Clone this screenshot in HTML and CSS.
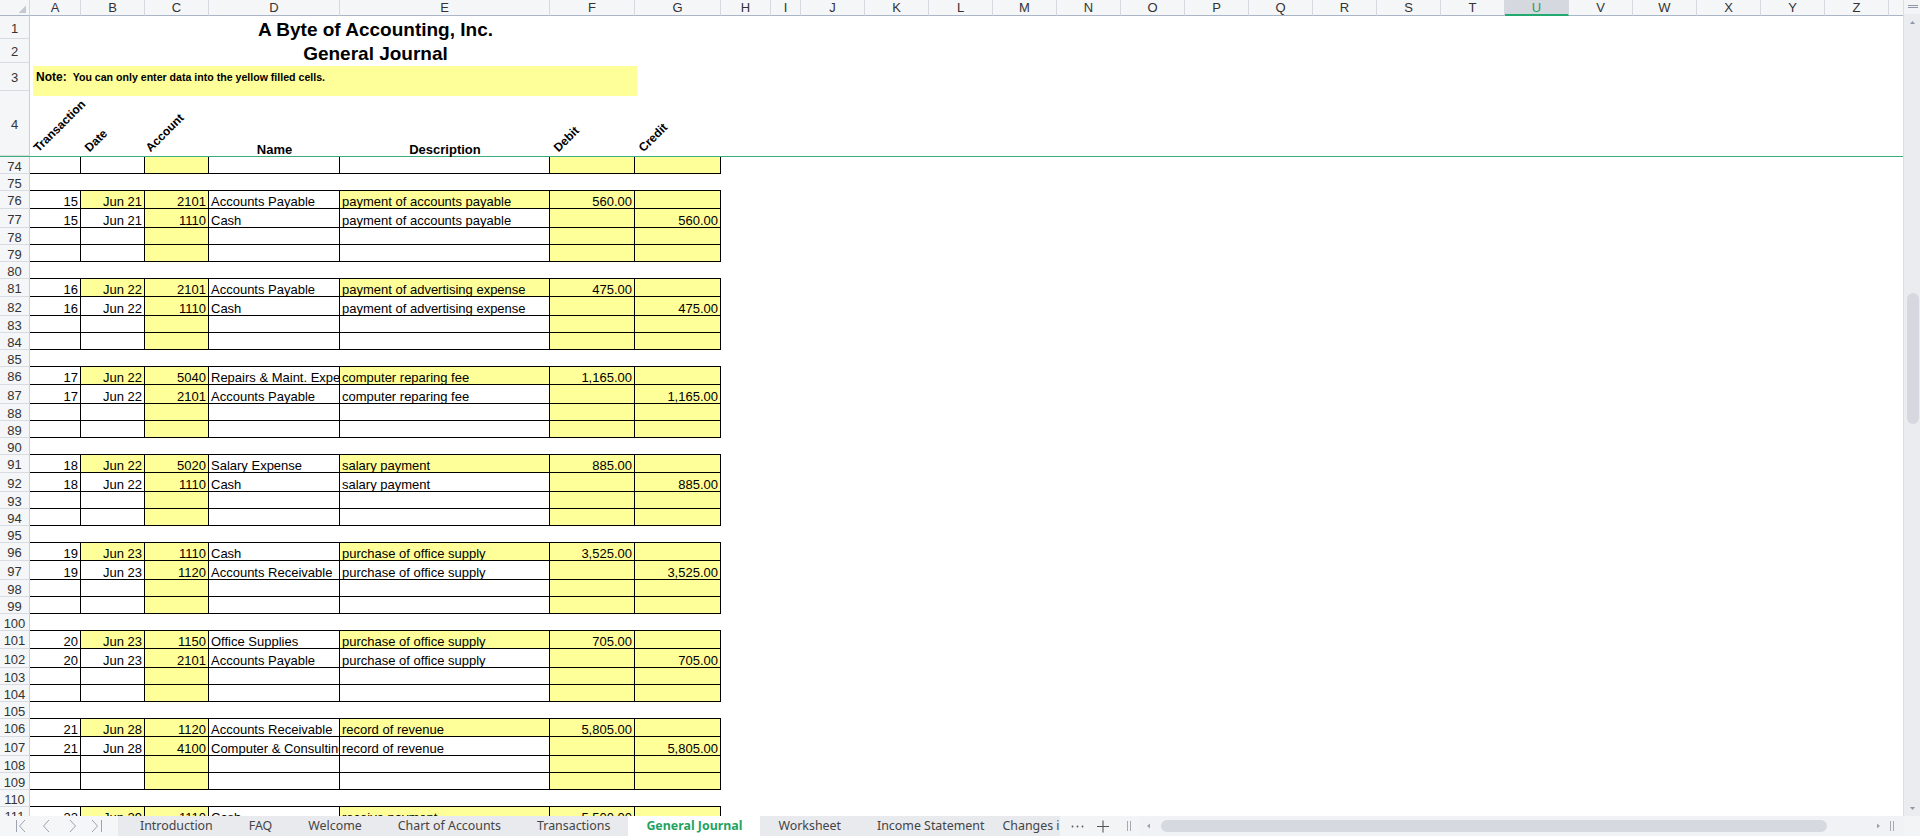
FILE: index.html
```html
<!DOCTYPE html>
<html lang="en">
<head>
<meta charset="utf-8">
<title>General Journal</title>
<link rel="stylesheet" href="styles.css">
</head>
<body>
<div class="app">
  <div class="main">
    <div class="sheet">
      <div class="colhdr">
        <div class="corner"><svg width="30" height="15" viewBox="0 0 30 15"><polygon points="26,5.5 26,13 18.5,13" fill="#c5c8ce"/></svg></div>
        <div class="ch wa">A</div><div class="ch wb">B</div><div class="ch wc">C</div><div class="ch wd">D</div><div class="ch we">E</div><div class="ch wf">F</div><div class="ch wg">G</div><div class="ch wh">H</div><div class="ch wi">I</div><div class="ch wn">J</div><div class="ch wn">K</div><div class="ch wn">L</div><div class="ch wn">M</div><div class="ch wn">N</div><div class="ch wn">O</div><div class="ch wn">P</div><div class="ch wn">Q</div><div class="ch wn">R</div><div class="ch wn">S</div><div class="ch wn">T</div><div class="ch wn sel">U</div><div class="ch wn">V</div><div class="ch wn">W</div><div class="ch wn">X</div><div class="ch wn">Y</div><div class="ch wn">Z</div><div class="ch rest"></div>
      </div>
      <div class="frozen">
        <div class="row h23"><div class="rh">1</div><div class="title">A Byte of Accounting, Inc.</div></div>
        <div class="row h24"><div class="rh">2</div><div class="title">General Journal</div></div>
        <div class="row h28"><div class="rh">3</div></div>
        <div class="row h65"><div class="rh">4</div><div class="hc rot wa"><span>Transaction</span></div><div class="hc rot wb"><span>Date</span></div><div class="hc rot acc wc"><span>Account</span></div><div class="hc lab wd">Name</div><div class="hc lab we">Description</div><div class="hc rot wf"><span>Debit</span></div><div class="hc rot cr wg"><span>Credit</span></div></div>
      </div>
      <div class="note"><b>Note:</b><span>You can only enter data into the yellow filled cells.</span></div>
      <div class="freeze"></div>
      <div class="body">
        <div class="row h17"><div class="rh">74</div><div class="cell wa"></div><div class="cell wb"></div><div class="cell wc y"></div><div class="cell wd"></div><div class="cell we"></div><div class="cell wf y"></div><div class="cell wg y"></div></div>

        <div class="row h17"><div class="rh">75</div><div class="spline"></div></div>
        <div class="row h18"><div class="rh">76</div><div class="cell wa n">15</div><div class="cell wb n y">Jun 21</div><div class="cell wc n y">2101</div><div class="cell wd">Accounts Payable</div><div class="cell we y">payment of accounts payable</div><div class="cell wf n y">560.00</div><div class="cell wg n y"></div></div>
        <div class="row h19"><div class="rh">77</div><div class="cell wa n">15</div><div class="cell wb n">Jun 21</div><div class="cell wc n y">1110</div><div class="cell wd">Cash</div><div class="cell we">payment of accounts payable</div><div class="cell wf n y"></div><div class="cell wg n y">560.00</div></div>
        <div class="row h17"><div class="rh">78</div><div class="cell wa"></div><div class="cell wb"></div><div class="cell wc y"></div><div class="cell wd"></div><div class="cell we"></div><div class="cell wf y"></div><div class="cell wg y"></div></div>
        <div class="row h17"><div class="rh">79</div><div class="cell wa"></div><div class="cell wb"></div><div class="cell wc y"></div><div class="cell wd"></div><div class="cell we"></div><div class="cell wf y"></div><div class="cell wg y"></div></div>

        <div class="row h17"><div class="rh">80</div><div class="spline"></div></div>
        <div class="row h18"><div class="rh">81</div><div class="cell wa n">16</div><div class="cell wb n y">Jun 22</div><div class="cell wc n y">2101</div><div class="cell wd">Accounts Payable</div><div class="cell we y">payment of advertising expense</div><div class="cell wf n y">475.00</div><div class="cell wg n y"></div></div>
        <div class="row h19"><div class="rh">82</div><div class="cell wa n">16</div><div class="cell wb n">Jun 22</div><div class="cell wc n y">1110</div><div class="cell wd">Cash</div><div class="cell we">payment of advertising expense</div><div class="cell wf n y"></div><div class="cell wg n y">475.00</div></div>
        <div class="row h17"><div class="rh">83</div><div class="cell wa"></div><div class="cell wb"></div><div class="cell wc y"></div><div class="cell wd"></div><div class="cell we"></div><div class="cell wf y"></div><div class="cell wg y"></div></div>
        <div class="row h17"><div class="rh">84</div><div class="cell wa"></div><div class="cell wb"></div><div class="cell wc y"></div><div class="cell wd"></div><div class="cell we"></div><div class="cell wf y"></div><div class="cell wg y"></div></div>

        <div class="row h17"><div class="rh">85</div><div class="spline"></div></div>
        <div class="row h18"><div class="rh">86</div><div class="cell wa n">17</div><div class="cell wb n y">Jun 22</div><div class="cell wc n y">5040</div><div class="cell wd">Repairs &amp; Maint. Expense</div><div class="cell we y">computer reparing fee</div><div class="cell wf n y">1,165.00</div><div class="cell wg n y"></div></div>
        <div class="row h19"><div class="rh">87</div><div class="cell wa n">17</div><div class="cell wb n">Jun 22</div><div class="cell wc n y">2101</div><div class="cell wd">Accounts Payable</div><div class="cell we">computer reparing fee</div><div class="cell wf n y"></div><div class="cell wg n y">1,165.00</div></div>
        <div class="row h17"><div class="rh">88</div><div class="cell wa"></div><div class="cell wb"></div><div class="cell wc y"></div><div class="cell wd"></div><div class="cell we"></div><div class="cell wf y"></div><div class="cell wg y"></div></div>
        <div class="row h17"><div class="rh">89</div><div class="cell wa"></div><div class="cell wb"></div><div class="cell wc y"></div><div class="cell wd"></div><div class="cell we"></div><div class="cell wf y"></div><div class="cell wg y"></div></div>

        <div class="row h17"><div class="rh">90</div><div class="spline"></div></div>
        <div class="row h18"><div class="rh">91</div><div class="cell wa n">18</div><div class="cell wb n y">Jun 22</div><div class="cell wc n y">5020</div><div class="cell wd">Salary Expense</div><div class="cell we y">salary payment</div><div class="cell wf n y">885.00</div><div class="cell wg n y"></div></div>
        <div class="row h19"><div class="rh">92</div><div class="cell wa n">18</div><div class="cell wb n">Jun 22</div><div class="cell wc n y">1110</div><div class="cell wd">Cash</div><div class="cell we">salary payment</div><div class="cell wf n y"></div><div class="cell wg n y">885.00</div></div>
        <div class="row h17"><div class="rh">93</div><div class="cell wa"></div><div class="cell wb"></div><div class="cell wc y"></div><div class="cell wd"></div><div class="cell we"></div><div class="cell wf y"></div><div class="cell wg y"></div></div>
        <div class="row h17"><div class="rh">94</div><div class="cell wa"></div><div class="cell wb"></div><div class="cell wc y"></div><div class="cell wd"></div><div class="cell we"></div><div class="cell wf y"></div><div class="cell wg y"></div></div>

        <div class="row h17"><div class="rh">95</div><div class="spline"></div></div>
        <div class="row h18"><div class="rh">96</div><div class="cell wa n">19</div><div class="cell wb n y">Jun 23</div><div class="cell wc n y">1110</div><div class="cell wd">Cash</div><div class="cell we y">purchase of office supply</div><div class="cell wf n y">3,525.00</div><div class="cell wg n y"></div></div>
        <div class="row h19"><div class="rh">97</div><div class="cell wa n">19</div><div class="cell wb n">Jun 23</div><div class="cell wc n y">1120</div><div class="cell wd">Accounts Receivable</div><div class="cell we">purchase of office supply</div><div class="cell wf n y"></div><div class="cell wg n y">3,525.00</div></div>
        <div class="row h17"><div class="rh">98</div><div class="cell wa"></div><div class="cell wb"></div><div class="cell wc y"></div><div class="cell wd"></div><div class="cell we"></div><div class="cell wf y"></div><div class="cell wg y"></div></div>
        <div class="row h17"><div class="rh">99</div><div class="cell wa"></div><div class="cell wb"></div><div class="cell wc y"></div><div class="cell wd"></div><div class="cell we"></div><div class="cell wf y"></div><div class="cell wg y"></div></div>

        <div class="row h17"><div class="rh">100</div><div class="spline"></div></div>
        <div class="row h18"><div class="rh">101</div><div class="cell wa n">20</div><div class="cell wb n y">Jun 23</div><div class="cell wc n y">1150</div><div class="cell wd">Office Supplies</div><div class="cell we y">purchase of office supply</div><div class="cell wf n y">705.00</div><div class="cell wg n y"></div></div>
        <div class="row h19"><div class="rh">102</div><div class="cell wa n">20</div><div class="cell wb n">Jun 23</div><div class="cell wc n y">2101</div><div class="cell wd">Accounts Payable</div><div class="cell we">purchase of office supply</div><div class="cell wf n y"></div><div class="cell wg n y">705.00</div></div>
        <div class="row h17"><div class="rh">103</div><div class="cell wa"></div><div class="cell wb"></div><div class="cell wc y"></div><div class="cell wd"></div><div class="cell we"></div><div class="cell wf y"></div><div class="cell wg y"></div></div>
        <div class="row h17"><div class="rh">104</div><div class="cell wa"></div><div class="cell wb"></div><div class="cell wc y"></div><div class="cell wd"></div><div class="cell we"></div><div class="cell wf y"></div><div class="cell wg y"></div></div>

        <div class="row h17"><div class="rh">105</div><div class="spline"></div></div>
        <div class="row h18"><div class="rh">106</div><div class="cell wa n">21</div><div class="cell wb n y">Jun 28</div><div class="cell wc n y">1120</div><div class="cell wd">Accounts Receivable</div><div class="cell we y">record of revenue</div><div class="cell wf n y">5,805.00</div><div class="cell wg n y"></div></div>
        <div class="row h19"><div class="rh">107</div><div class="cell wa n">21</div><div class="cell wb n">Jun 28</div><div class="cell wc n y">4100</div><div class="cell wd">Computer &amp; Consulting Revenue</div><div class="cell we">record of revenue</div><div class="cell wf n y"></div><div class="cell wg n y">5,805.00</div></div>
        <div class="row h17"><div class="rh">108</div><div class="cell wa"></div><div class="cell wb"></div><div class="cell wc y"></div><div class="cell wd"></div><div class="cell we"></div><div class="cell wf y"></div><div class="cell wg y"></div></div>
        <div class="row h17"><div class="rh">109</div><div class="cell wa"></div><div class="cell wb"></div><div class="cell wc y"></div><div class="cell wd"></div><div class="cell we"></div><div class="cell wf y"></div><div class="cell wg y"></div></div>

        <div class="row h17"><div class="rh">110</div><div class="spline"></div></div>
        <div class="row h18"><div class="rh">111</div><div class="cell wa n">22</div><div class="cell wb n y">Jun 29</div><div class="cell wc n y">1110</div><div class="cell wd">Cash</div><div class="cell we y">receive payment</div><div class="cell wf n y">5,500.00</div><div class="cell wg n y"></div></div>
      </div>
    </div>
    <div class="vscroll">
      <div class="vtop"><svg width="16" height="14" viewBox="0 0 16 14"><path d="M4 5.5H14M4 7.5H14" stroke="#8e97a9" stroke-width="1"/></svg></div>
      <div class="varrow"><svg width="16" height="16" viewBox="0 0 16 16"><polygon points="6,10 11,10 8.5,7" fill="#8e97a9"/></svg></div>
      <div class="vtrack"><div class="vthumb"></div></div>
      <div class="varrow"><svg width="16" height="16" viewBox="0 0 16 16"><polygon points="6,7 11,7 8.5,10" fill="#8e97a9"/></svg></div>
    </div>
  </div>
  <div class="tabbar">
    <div class="nav"><svg width="118" height="20" viewBox="0 0 118 20"><g fill="none" stroke="#9ca2ae" stroke-width="1"><path d="M16.5 4V16M25 4L19.5 10L25 16"/><path d="M49 4L43.5 10L49 16"/><path d="M70 4L75.5 10L70 16"/><path d="M92 4L97.5 10L92 16M101.5 4V16"/></g></svg></div>
    <div class="tabs">
      <div class="tab">Introduction</div>
      <div class="tab">FAQ</div>
      <div class="tab">Welcome</div>
      <div class="tab">Chart of Accounts</div>
      <div class="tab">Transactions</div>
      <div class="tab active">General Journal</div>
      <div class="tab">Worksheet</div>
      <div class="tab">Income Statement</div>
      <div class="tab last">Changes in Equity</div>
    </div>
    <div class="tools"><svg width="80" height="20" viewBox="0 0 80 20"><g fill="#555"><circle cx="12.5" cy="10.5" r="0.9"/><circle cx="17.5" cy="10.5" r="0.9"/><circle cx="22.5" cy="10.5" r="0.9"/></g><path d="M37 10.5H49M43 4.5V16.5" stroke="#555" stroke-width="1.1" fill="none"/><path d="M67.5 5V15M70.5 5V15" stroke="#a4a9b3" stroke-width="1" fill="none"/></svg></div>
    <div class="hscroll">
      <svg class="harrow" width="16" height="20" viewBox="0 0 16 20"><polygon points="10,7.5 10,12.5 7,10" fill="#9ca2ae"/></svg>
      <div class="hthumb"></div>
      <svg class="harrow right" width="16" height="20" viewBox="0 0 16 20"><polygon points="6,7.5 6,12.5 9,10" fill="#9ca2ae"/></svg>
      <svg class="hsplit" width="8" height="20" viewBox="0 0 8 20"><path d="M2.5 5V15M5.5 5V15" stroke="#a4a9b3" stroke-width="1" fill="none"/></svg>
    </div>
    <div class="bcorner"></div>
  </div>
</div>
</body>
</html>
```

FILE: styles.css
```css
html, body {
  margin: 0;
  padding: 0;
}
body {
  width: 1920px;
  height: 836px;
  overflow: hidden;
  background: #fff;
  font-family: "Liberation Sans", Arial, sans-serif;
  color: #000;
}
.app {
  display: flex;
  flex-direction: column;
  width: 1920px;
  height: 836px;
}
.main {
  display: flex;
  height: 816px;
}
.sheet {
  position: relative;
  width: 1903px;
  height: 816px;
  overflow: hidden;
  background: #fff;
  flex: none;
}

/* column header */
.colhdr {
  display: flex;
  height: 16px;
}
.corner, .ch {
  flex: none;
  box-sizing: border-box;
  height: 16px;
  background: #f5f6f8;
  border-bottom: 1px solid #abb5c8;
}
.corner {
  width: 30px;
  border-right: 1px solid #d3d7de;
}
.corner svg { display: block; }
.ch {
  border-right: 1px solid #d6d9e0;
  font-size: 13px;
  line-height: 15px;
  color: #333;
  text-align: center;
}
.ch.sel {
  background: #d5d8de;
  color: #1e9f68;
  border-bottom: 2px solid #21a96f;
}
.ch.rest {
  flex: 1;
  border-right: none;
}

/* widths */
.wa { width: 51px; }
.wb { width: 64px; }
.wc { width: 64px; }
.wd { width: 131px; }
.we { width: 210px; }
.wf { width: 85px; }
.wg { width: 86px; }
.wh { width: 50px; }
.wi { width: 30px; }
.wn { width: 64px; }

/* rows */
.row { display: flex; }
.h17 { height: 17px; }
.h18 { height: 18px; }
.h19 { height: 19px; }
.h23 { height: 23px; }
.h24 { height: 24px; }
.h28 { height: 28px; }
.h65 { height: 65px; }

.rh {
  flex: none;
  width: 30px;
  height: 100%;
  box-sizing: border-box;
  border-right: 1px solid #c9ced8;
  border-bottom: 1px solid #d8dbe2;
  background: #f5f6f8;
  color: #333;
  font-size: 13px;
  display: flex;
  align-items: center;
  justify-content: center;
  padding-top: 2px;
}

/* frozen title area */
.title {
  flex: none;
  width: 691px;
  display: flex;
  justify-content: center;
  align-items: flex-end;
  font-weight: bold;
  font-size: 19px;
  line-height: 19px;
}
.note {
  position: absolute;
  left: 33px;
  top: 66px;
  width: 604px;
  height: 30px;
  box-sizing: border-box;
  background: #ffff99;
  padding: 3px 0 0 3px;
  line-height: 14px;
  font-weight: bold;
  white-space: nowrap;
}
.note b { font-size: 12px; }
.note span { font-size: 10.6px; margin-left: 6px; }

.hc {
  flex: none;
  box-sizing: border-box;
  display: flex;
  align-items: flex-end;
}
.hc.rot { padding: 0 0 2px 10px; }
.hc.rot.acc { padding-left: 7px; }
.hc.rot.cr { padding-left: 10px; }
.hc.rot span {
  display: block;
  flex: none;
  font-weight: bold;
  font-size: 12px;
  line-height: 12px;
  white-space: nowrap;
  transform: rotate(-45deg);
  transform-origin: 0 100%;
}
.hc.lab {
  justify-content: center;
  font-weight: bold;
  font-size: 13px;
  line-height: 13px;
}

.freeze {
  height: 1px;
  background: #3dae7b;
}

/* body */
.body {
  height: 659px;
  overflow: hidden;
}
.cell {
  flex: none;
  box-sizing: border-box;
  height: 100%;
  border-right: 1px solid #000;
  border-bottom: 1px solid #000;
  padding: 0 2px;
  display: flex;
  align-items: flex-end;
  font-size: 13px;
  line-height: 12px;
  overflow: hidden;
  white-space: nowrap;
}
.cell.n { justify-content: flex-end; }
.cell.y { background: #ffff99; }
.spline {
  flex: none;
  width: 691px;
  height: 100%;
  box-sizing: border-box;
  border-bottom: 1px solid #000;
}

/* vertical scrollbar */
.vscroll {
  flex: none;
  width: 16px;
  height: 816px;
  border-left: 1px solid #dadde3;
  background: #eaecf0;
  display: flex;
  flex-direction: column;
}
.vtop {
  height: 14px;
  background: #f3f4f6;
}
.vtop svg, .varrow svg { display: block; }
.varrow { height: 16px; }
.vtrack {
  flex: 1;
}
.vthumb {
  margin-top: 263px;
  margin-left: 3px;
  width: 12px;
  height: 131px;
  border-radius: 6px;
  background: #d5d8df;
}

/* tab bar */
.tabbar {
  height: 20px;
  display: flex;
  background: #e9eaee;
  font-family: "Noto Sans", "Open Sans", sans-serif;
  font-size: 12.4px;
  color: #444;
}
.nav {
  flex: none;
  width: 118px;
  background: #f5f6f8;
}
.nav svg, .tools svg { display: block; }
.tabs {
  flex: none;
  width: 942px;
  box-sizing: border-box;
  padding-left: 4px;
  display: flex;
  overflow: hidden;
}
.tab {
  flex: none;
  padding: 0 18px;
  line-height: 20px;
  white-space: nowrap;
}
.tab.last { padding-left: 0; }
.tab.active {
  background: #fff;
  color: #1fa362;
  font-weight: bold;
}
.tools {
  flex: none;
  width: 80px;
  background: #f3f4f6;
}
.hscroll {
  flex: none;
  width: 764px;
  display: flex;
  align-items: center;
  background: #f1f2f5;
}
.harrow { display: block; flex: none; }
.hthumb {
  flex: none;
  width: 666px;
  height: 12px;
  margin-left: 5px;
  border-radius: 6px;
  background: #d6d9e0;
}
.harrow.right { margin-left: 44px; }
.hsplit { display: block; flex: none; margin-left: 1px; }
.bcorner {
  flex: 1;
  background: #f3f4f6;
}
```
